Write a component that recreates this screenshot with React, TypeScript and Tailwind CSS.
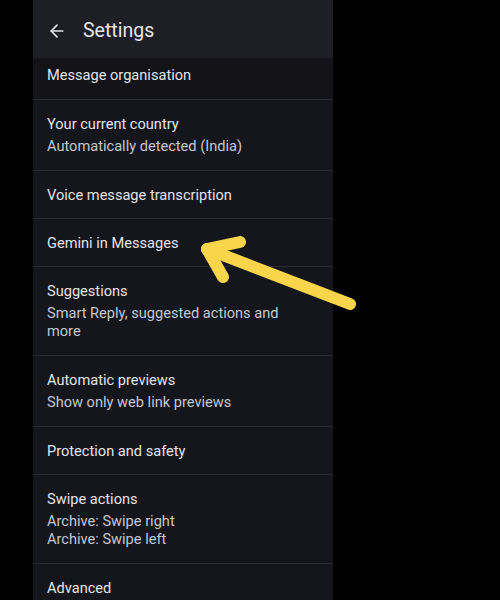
import React from "react";

type Row = { title: string; sub?: string[]; first?: boolean };

const rows: Row[] = [
  { title: "Message organisation", first: true },
  { title: "Your current country", sub: ["Automatically detected (India)"] },
  { title: "Voice message transcription" },
  { title: "Gemini in Messages" },
  { title: "Suggestions", sub: ["Smart Reply, suggested actions and", "more"] },
  { title: "Automatic previews", sub: ["Show only web link previews"] },
  { title: "Protection and safety" },
  { title: "Swipe actions", sub: ["Archive: Swipe right", "Archive: Swipe left"] },
  { title: "Advanced" },
];

export default function App() {
  return (
    <div
      className="relative w-[500px] h-[600px] bg-black overflow-hidden"
      style={{ fontFamily: "Roboto, 'Noto Sans', sans-serif" }}
    >
      <div className="ml-[33px] w-[300px] h-full bg-[#15161b] flex flex-col">
        <div className="h-[58px] shrink-0 bg-[#1e1f25] flex items-center pl-[14px] pt-[4px]">
          <svg width="20" height="20" viewBox="0 0 24 24" fill="none" stroke="#e3e3e8" strokeWidth="2" strokeLinecap="round" strokeLinejoin="round">
            <path d="M19 12H5" />
            <path d="M12 19l-7-7 7-7" />
          </svg>
          <span className="ml-[16px] text-[19.5px] text-[#e6e6ea] leading-none">Settings</span>
        </div>
        {rows.map((r, i) => (
          <div
            key={i}
            className={`px-[14px] ${
              r.first ? "pt-[7px] pb-[14px] bg-[#131318]" : r.sub ? "pt-[14px] pb-[15px]" : "pt-[14px] pb-[13px]"
            } border-b border-[#2a2b31]`}
          >
            <div className="text-[14.6px] leading-[20px] text-[#e3e3e8]">{r.title}</div>
            {r.sub && (
              <div className="mt-[3px] text-[14.6px] leading-[18px] text-[#c5c6cf]">
                {r.sub.map((s, j) => (
                  <div key={j}>{s}</div>
                ))}
              </div>
            )}
          </div>
        ))}
      </div>
      <svg className="absolute left-0 top-0" width="500" height="600" viewBox="0 0 500 600" fill="none">
        <g stroke="#f8d54a" strokeWidth="12" strokeLinecap="round" strokeLinejoin="round">
          <path d="M350 304 L207 249" />
          <path d="M240 242 L207 249 L223 277" />
        </g>
      </svg>
    </div>
  );
}
